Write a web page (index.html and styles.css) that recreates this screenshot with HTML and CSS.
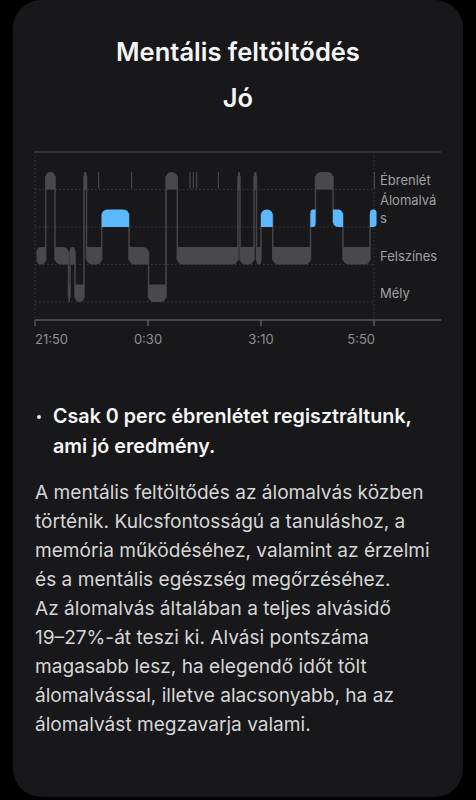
FILE: index.html
```html
<!DOCTYPE html>
<html lang="hu">
<head>
    <meta charset="UTF-8">
    <meta name="viewport" content="width=device-width, initial-scale=1.0">
    <title>Mentális feltöltődés</title>
    <link rel="stylesheet" href="styles.css">
</head>
<body>
    <div class="card">
        <h1 class="title">Mentális feltöltődés</h1>
        <div class="score">Jó</div>

        <!-- alvási szakaszok grafikonja -->
        <div class="chart">
            <svg id="hypnogram" width="416" height="210" viewBox="30 145 416 210">
                <line class="frame" x1="34" y1="152" x2="441" y2="152"/>
                <line class="grid" x1="35" y1="189.5" x2="374" y2="189.5"/>
                <line class="grid" x1="35" y1="227" x2="374" y2="227"/>
                <line class="grid" x1="35" y1="264.5" x2="374" y2="264.5"/>
                <line class="grid" x1="35" y1="302" x2="374" y2="302"/>
                <line class="grid" x1="35" y1="152" x2="35" y2="320"/>
                <line class="grid" x1="374" y1="152" x2="374" y2="320"/>
                <g id="stages"></g>
                <line class="axis" x1="35" y1="320" x2="441" y2="320"/>
                <line class="axis" x1="35" y1="320" x2="35" y2="326"/>
                <line class="axis" x1="148" y1="320" x2="148" y2="326"/>
                <line class="axis" x1="261" y1="320" x2="261" y2="326"/>
                <line class="axis" x1="374" y1="320" x2="374" y2="326"/>

                <text class="stage-label" x="380" y="185">Ébrenlét</text>
                <text class="stage-label" x="380" y="205">Álomalvá</text>
                <text class="stage-label" x="380" y="223">s</text>
                <text class="stage-label" x="380" y="261">Felszínes</text>
                <text class="stage-label" x="380" y="298">Mély</text>

                <text class="time-label" x="35" y="344">21:50</text>
                <text class="time-label" x="148" y="344" text-anchor="middle">0:30</text>
                <text class="time-label" x="261" y="344" text-anchor="middle">3:10</text>
                <text class="time-label" x="375" y="344" text-anchor="end">5:50</text>
            </svg>
        </div>

        <ul class="notes">
            <li>Csak 0 perc ébrenlétet regisztráltunk, ami jó eredmény.</li>
        </ul>

        <p class="desc">A mentális feltöltődés az álomalvás közben történik. Kulcsfontosságú a tanuláshoz, a memória működéséhez, valamint az érzelmi és a mentális egészség megőrzéséhez.<br>Az álomalvás általában a teljes alvásidő 19–&#8288;27%-át teszi ki. Alvási pontszáma magasabb lesz, ha elegendő időt tölt álomalvással, illetve alacsonyabb, ha az álomalvást megzavarja valami.</p>
    </div>

    <script>
        const NS = "http://www.w3.org/2000/svg";
        const BAND = 17.5;
        const levels = { awake: 172, rem: 209.5, light: 247, deep: 284.5 };
        const depth = { awake: 0, rem: 1, light: 2, deep: 3 };

        // [szakasz, kezdet x, vég x]
        const segments = [
            ["light", 36.5, 45.7],
            ["awake", 45.7, 55],
            ["light", 55, 68.5],
            ["deep", 68.5, 70],
            ["light", 70, 75],
            ["deep", 75, 84],
            ["awake", 84, 86.5],
            ["light", 86.5, 101.7],
            ["rem", 101.7, 129],
            ["light", 129, 148.5],
            ["deep", 148.5, 166],
            ["awake", 166, 177.3],
            ["light", 177.3, 238],
            ["awake", 238, 240],
            ["light", 240, 254],
            ["awake", 254, 256.5],
            ["light", 256.5, 261],
            ["rem", 261, 272.7],
            ["light", 272.7, 310.5],
            ["rem", 310.5, 315.5],
            ["awake", 315.5, 333],
            ["rem", 333, 343],
            ["light", 343, 370],
            ["rem", 370, 376.5]
        ];

        // rövid ébredések
        const blips = [98.7, 131.7, 190, 193.3, 196.7, 218.3, 374.3];

        const group = document.getElementById("stages");

        function add(tag, attrs) {
            const el = document.createElementNS(NS, tag);
            for (const k in attrs) el.setAttribute(k, attrs[k]);
            group.appendChild(el);
            return el;
        }

        function roundedPath(x, y, w, h, tl, tr, br, bl) {
            return "M" + (x + tl) + "," + y +
                " H" + (x + w - tr) + " A" + tr + "," + tr + " 0 0 1 " + (x + w) + "," + (y + tr) +
                " V" + (y + h - br) + " A" + br + "," + br + " 0 0 1 " + (x + w - br) + "," + (y + h) +
                " H" + (x + bl) + " A" + bl + "," + bl + " 0 0 1 " + x + "," + (y + h - bl) +
                " V" + (y + tl) + " A" + tl + "," + tl + " 0 0 1 " + (x + tl) + "," + y + " Z";
        }

        // átmenetek
        for (let i = 0; i < segments.length - 1; i++) {
            const a = segments[i][0], b = segments[i + 1][0];
            const upper = depth[a] < depth[b] ? a : b;
            const lower = depth[a] < depth[b] ? b : a;
            add("rect", {
                class: "link",
                x: segments[i][2] - 0.75,
                y: levels[upper] + 4,
                width: 1.5,
                height: levels[lower] + BAND - 4 - levels[upper] - 4
            });
        }

        blips.forEach(x => add("rect", { class: "blip", x: x - 0.5, y: levels.awake, width: 1, height: BAND - 1 }));

        segments.forEach((seg, i) => {
            const [stage, x1, x2] = seg;
            const prev = segments[i - 1], next = segments[i + 1];
            const w = x2 - x1;
            const r = Math.min(5.5, w / 2);
            const tl = prev && depth[prev[0]] < depth[stage] ? 0 : r;
            const bl = prev && depth[prev[0]] > depth[stage] ? 0 : r;
            const tr = next && depth[next[0]] < depth[stage] ? 0 : r;
            const br = next && depth[next[0]] > depth[stage] ? 0 : r;
            add("path", {
                class: stage === "rem" ? "block rem" : "block",
                d: roundedPath(x1, levels[stage], w, BAND, tl, tr, br, bl)
            });
        });
    </script>
</body>
</html>
```

FILE: styles.css
```css
body {
    margin: 0;
    padding: 0 13px 3px;
    background-color: #000000;
    font-family: Inter, "Noto Sans", sans-serif;
    color: #f4f4f4;
}

.card {
    height: 797px;
    box-sizing: border-box;
    padding: 29px 22px 0;
    background-color: #18181a;
    border-radius: 28px;
}

.title,
.score {
    margin: 0;
    font-size: 25.5px;
    font-weight: 600;
    line-height: 46px;
    text-align: center;
    color: #f6f6f6;
}

.chart {
    margin: 24px -5px 0;
}

.chart svg {
    display: block;
}

.frame {
    stroke: #3c3c3e;
    stroke-width: 1.5;
}

.axis {
    stroke: #58585a;
    stroke-width: 1.5;
}

.grid {
    stroke: #3a3a3c;
    stroke-width: 1;
    stroke-dasharray: 1.5 2.5;
}

.block {
    fill: #49494b;
}

.block.rem {
    fill: #5bbaff;
}

.link {
    fill: #454547;
}

.blip {
    fill: #525254;
}

.stage-label {
    font-family: Inter, "Noto Sans", sans-serif;
    font-size: 13px;
    fill: #a0a0a2;
}

.time-label {
    font-family: Inter, "Noto Sans", sans-serif;
    font-size: 13px;
    fill: #8e8e90;
}

.notes {
    margin: 47px 0 0;
    padding: 0;
    list-style: none;
}

.notes li {
    display: flex;
    font-size: 19.7px;
    font-weight: 600;
    line-height: 29.5px;
    color: #f6f6f6;
}

.notes li::before {
    content: "";
    flex: none;
    width: 4px;
    height: 4px;
    margin: 13px 12px 0 2px;
    border-radius: 50%;
    background-color: #e8e8e8;
}

.desc {
    margin: 17px 0 0;
    font-size: 19.1px;
    line-height: 29px;
    color: #d6d6d6;
}
```
